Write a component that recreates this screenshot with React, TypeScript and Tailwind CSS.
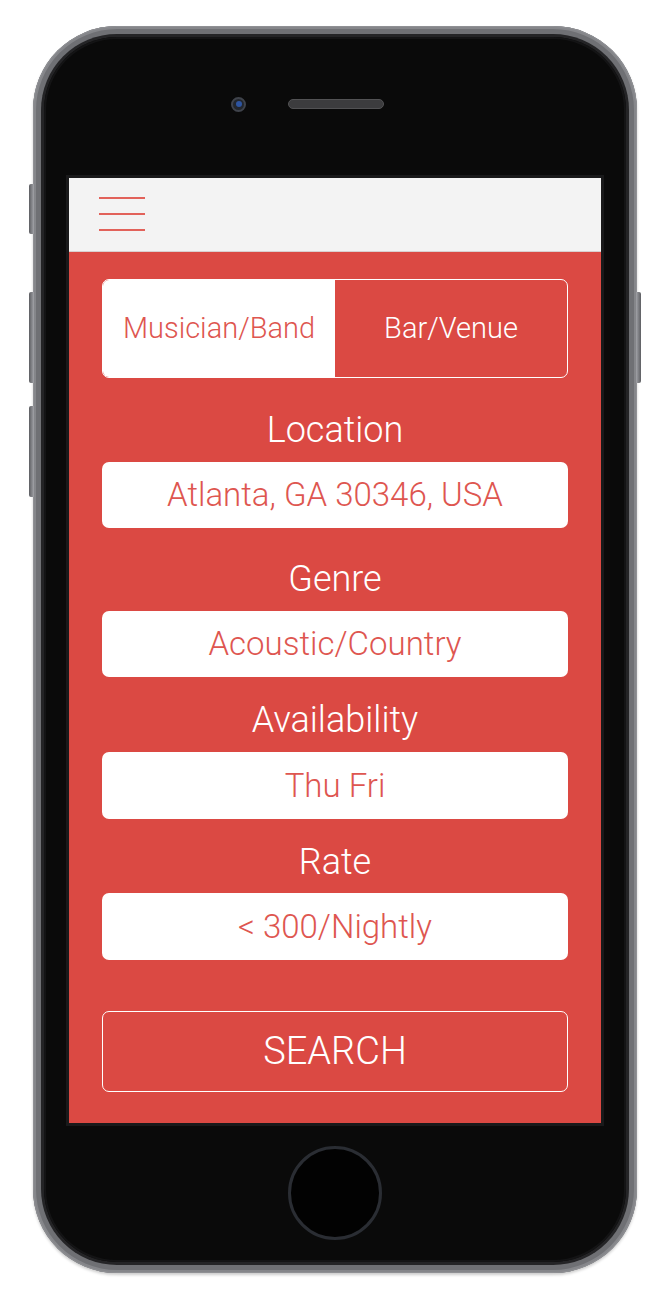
import React from "react";

function Field({ label, value, mt, inputMt, h = "h-[66px]" }: { label: string; value: string; mt: string; inputMt: string; h?: string }) {
  return (
    <>
      <div className={`${mt} leading-[44px] h-[44px] text-center text-white text-[36px] font-light`}>{label}</div>
      <div className={`${inputMt} ${h} rounded-[7px] bg-white flex items-center justify-center text-[#de5650] text-[33px] font-light`}>
        {value}
      </div>
    </>
  );
}

export default function App() {
  return (
    <div
      className="relative w-[662px] h-[1302px] bg-white pt-[26px] pl-[33px]"
      style={{ fontFamily: "Roboto, 'Liberation Sans', sans-serif" }}
    >
      {/* side buttons */}
      <div className="absolute left-[29px] top-[184px] w-[5px] h-[50px] rounded-l-[2px] bg-gradient-to-r from-[#5d5e62] to-[#a2a3a8]" />
      <div className="absolute left-[29px] top-[292px] w-[5px] h-[91px] rounded-l-[2px] bg-gradient-to-r from-[#5d5e62] to-[#a2a3a8]" />
      <div className="absolute left-[29px] top-[406px] w-[5px] h-[91px] rounded-l-[2px] bg-gradient-to-r from-[#5d5e62] to-[#a2a3a8]" />
      <div className="absolute left-[636px] top-[292px] w-[5px] h-[91px] rounded-r-[2px] bg-gradient-to-l from-[#5d5e62] to-[#a2a3a8]" />

      {/* phone body */}
      <div className="w-[604px] h-[1247px] rounded-[84px] p-[8px] bg-[#6f7074] shadow-[inset_0_0_0_1px_#8f9094,inset_0_0_0_3px_#85868a,0_2px_3px_rgba(0,0,0,0.2)]">
        <div className="h-full rounded-[76px] p-[3px] bg-[#242426]">
          <div className="h-full rounded-[73px] bg-[#0a0a0a] flex flex-col shadow-[inset_0_0_0_2px_#141415]">
            {/* camera + speaker */}
            <div className="mt-[60px] h-[14px] flex items-center pl-[187px]">
              <div className="w-[15px] h-[15px] rounded-full bg-[#22262d] border-2 border-[#3f434b] flex items-center justify-center">
                <div className="w-[6px] h-[6px] rounded-full bg-[#2d54a0]" />
              </div>
              <div className="ml-[42px] w-[96px] h-[10px] rounded-full bg-[#3c3c3e] border border-[#525254]" />
            </div>

            {/* screen */}
            <div className="mt-[64px] self-center w-[538px] h-[951px] p-[3px] bg-[#19191a]">
              <div className="w-full h-full bg-[#db4943] flex flex-col">
                {/* header */}
                <div className="h-[74px] bg-[#f3f3f3] pl-[30px] pt-[19px] flex flex-col gap-[14px] border-b border-[#d9d0cf]">
                  <div className="w-[46px] h-[2px] bg-[#e2625a]" />
                  <div className="w-[46px] h-[2px] bg-[#e2625a]" />
                  <div className="w-[46px] h-[2px] bg-[#e2625a]" />
                </div>

                <div className="px-[33px] flex flex-col">
                  {/* toggle */}
                  <div className="mt-[27px] h-[99px] rounded-[7px] border-[1.5px] border-white flex overflow-hidden">
                    <div className="w-[232px] bg-white flex items-center justify-center text-[#de5650] text-[29px] font-light">
                      Musician/Band
                    </div>
                    <div className="flex-1 flex items-center justify-center text-white text-[29px] font-light">
                      Bar/Venue
                    </div>
                  </div>

                  <Field label="Location" value="Atlanta, GA 30346, USA" mt="mt-[30px]" inputMt="mt-[10px]" />
                  <Field label="Genre" value="Acoustic/Country" mt="mt-[29px]" inputMt="mt-[10px]" />
                  <Field label="Availability" value="Thu Fri" mt="mt-[21px]" inputMt="mt-[10px]" h="h-[67px]" />
                  <Field label="Rate" value="< 300/Nightly" mt="mt-[21px]" inputMt="mt-[9px]" h="h-[67px]" />

                  {/* search */}
                  <div className="mt-[51px] h-[81px] rounded-[7px] border-[1.5px] border-white flex items-center justify-center text-white text-[38px] font-light">
                    SEARCH
                  </div>
                </div>
              </div>
            </div>

            {/* home button */}
            <div className="mt-[20px] self-center w-[94px] h-[94px] rounded-full border-[3px] border-[#2a2d33] bg-[#020202]" />
          </div>
        </div>
      </div>
    </div>
  );
}
